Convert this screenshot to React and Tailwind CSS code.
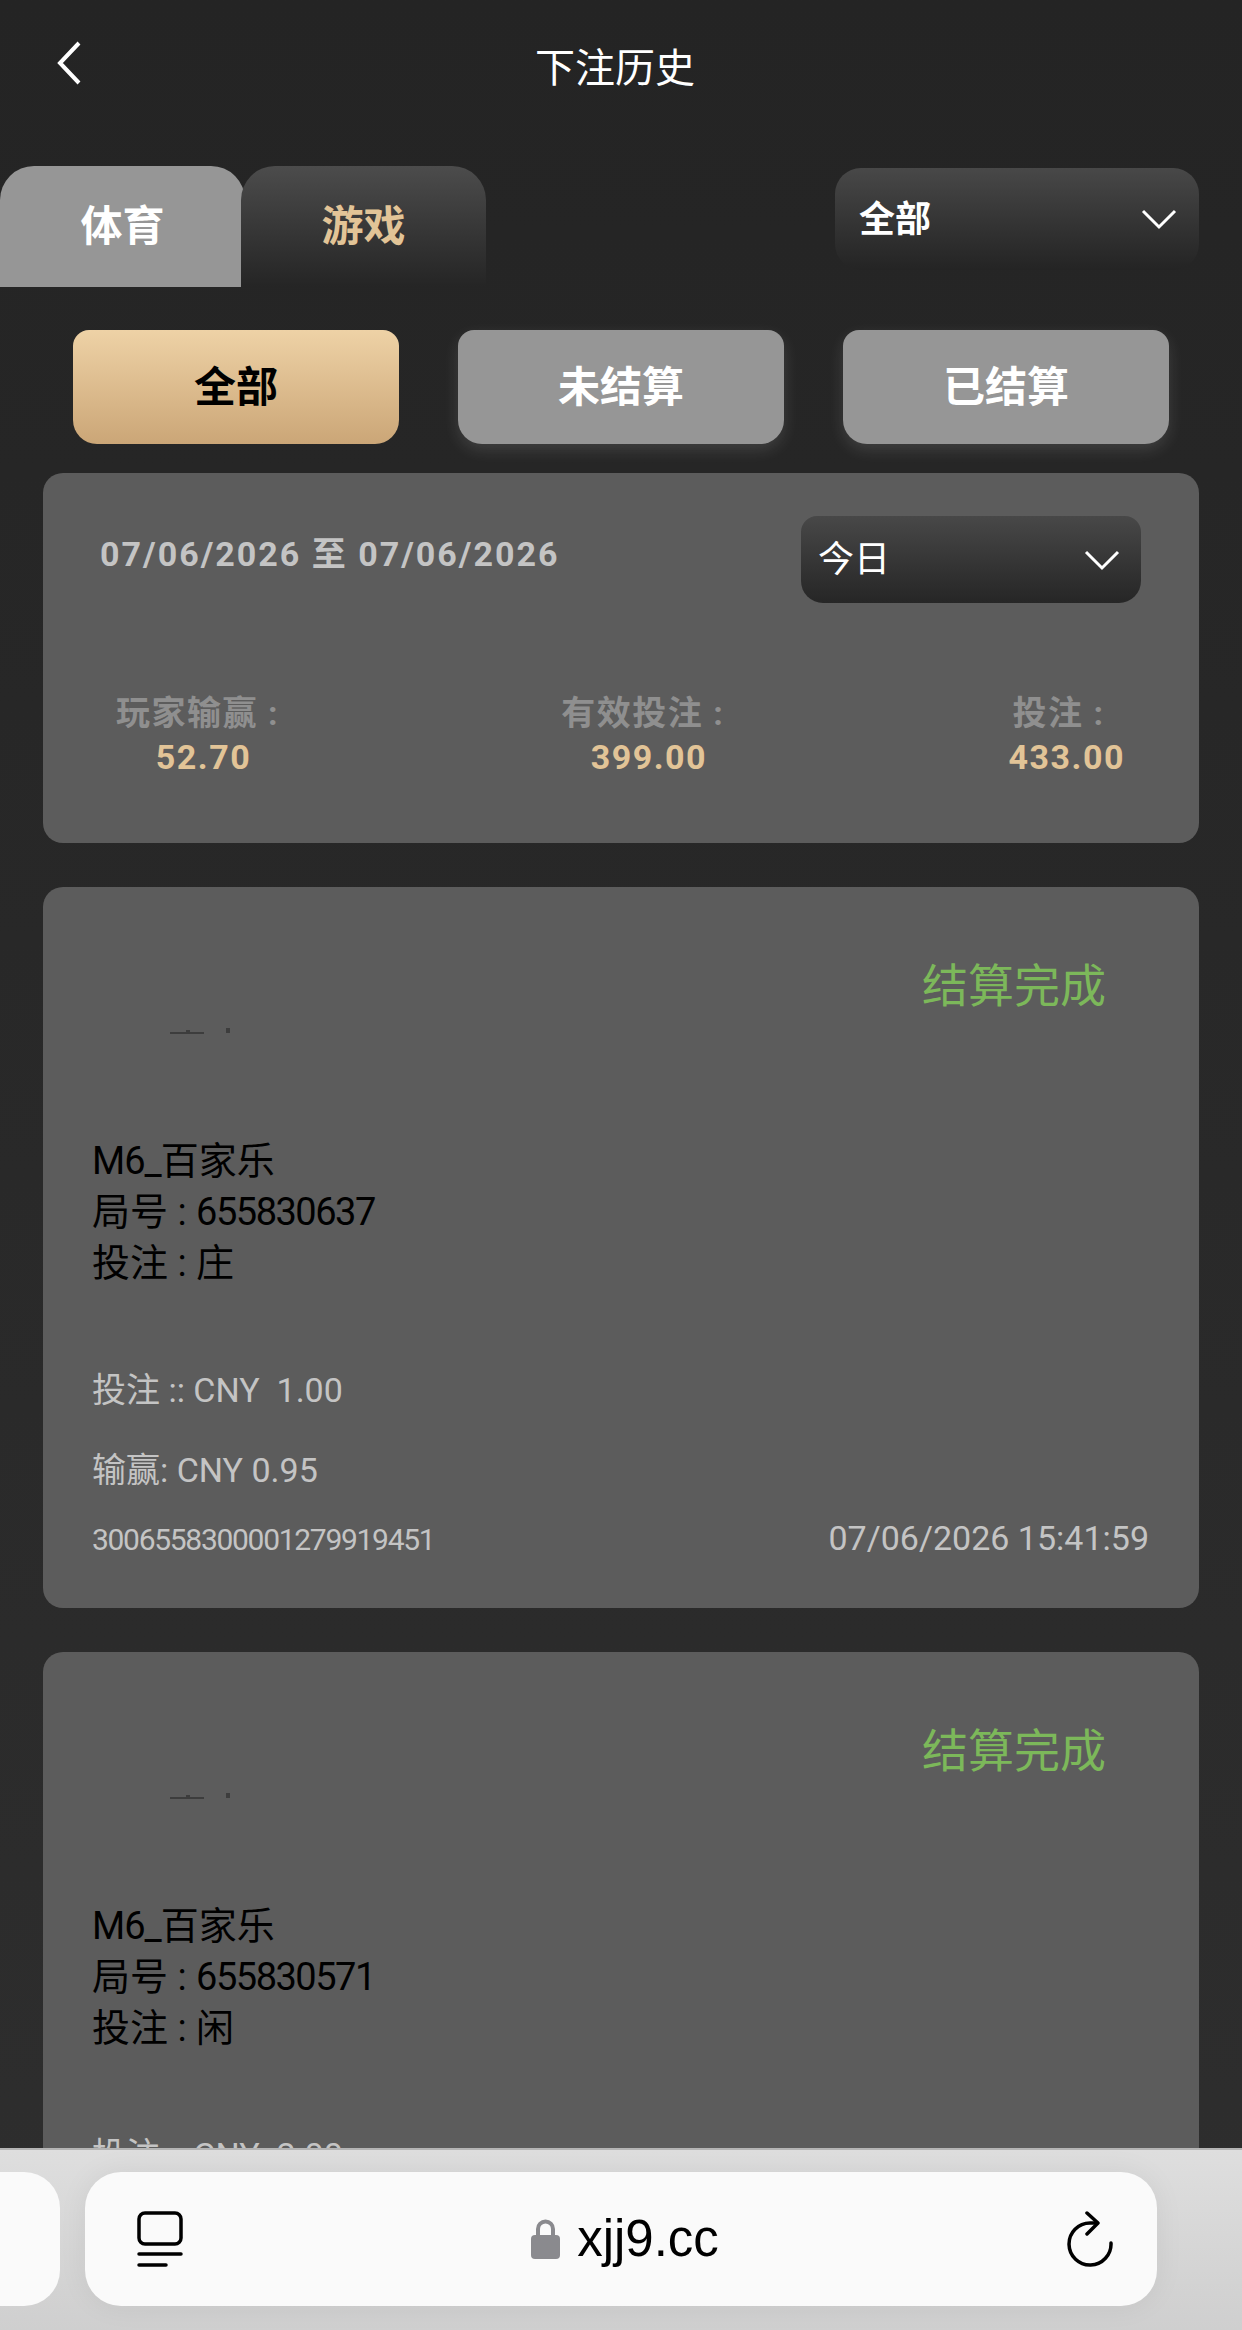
import React from 'react';

const font = { fontFamily: '"Roboto", "Noto Sans CJK SC", sans-serif' };

const Chevron = ({ className }) => (
  <svg className={className} viewBox="0 0 36 22" fill="none" stroke="#fff" strokeWidth="3">
    <path d="M2 3 L18 19 L34 3" />
  </svg>
);

const Stat = ({ label, value, className = '' }) => (
  <div className={`text-center ${className}`}>
    <div className="flex items-center text-[34px] font-bold leading-[44px] tracking-[1.5px] text-[#8f8f8f]">
      {label}
      <span className="ml-[10px] pr-[6px]">:</span>
    </div>
    <div className="pl-[6px] text-[34px] font-bold leading-[44px] tracking-[1.5px] text-[#e2c497]">{value}</div>
  </div>
);

const BetCard = ({ round, side, id, time, stake, win }) => (
  <div className="mx-[43px] mt-[44px] h-[721px] shrink-0 rounded-[20px] bg-[#5c5c5c] pl-[49px] pr-[50px]">
    <div className="pt-[67px] pr-[43px] text-right text-[46px] leading-[64px] text-[#7cb85a]">结算完成</div>
    {/* clipped line of the original page */}
    <div className="mt-[8px] flex h-[8px] items-end pl-[78px]">
      <div className="relative h-[2px] w-[34px] bg-[#3d3d3d]">
        <div className="absolute left-[16px] top-[-2px] h-[2px] w-[4px] bg-[#3d3d3d]"></div>
      </div>
      <div className="ml-[22px] mb-[1px] h-[5px] w-[4px] bg-[#3d3d3d]"></div>
    </div>
    <div className="mt-[102px] text-[38px] leading-[51px] text-black">
      <div><span className="tracking-[-1px]">M6_</span>百家乐</div>
      <div>局号 : <span className="tracking-[-1.5px]">{round}</span></div>
      <div>投注 : {side}</div>
    </div>
    <div className="mt-[76px] text-[34px] leading-[50px] text-[#c4c4c4]">投注 :: CNY&nbsp;&nbsp;{stake}</div>
    <div className="mt-[30px] text-[34px] leading-[50px] text-[#c4c4c4]">输赢: CNY {win}</div>
    <div className="mt-[25px] flex items-center justify-between text-[#c4c4c4]">
      <span className="text-[30px] leading-[40px] tracking-[-1.3px]">{id}</span>
      <span className="-mt-[4px] text-[34px] leading-[40px]">{time}</span>
    </div>
  </div>
);

const App = () => {
  return (
    <div style={font} className="relative flex h-[2330px] w-[1242px] flex-col overflow-hidden bg-gradient-to-b from-[#242424] to-[#2e2e2e]">
      {/* Header */}
      <div className="relative flex h-[166px] shrink-0 justify-center pt-[41px] pr-[12px]">
        <svg className="absolute left-[54px] top-[40px] h-[46px] w-[30px]" viewBox="0 0 30 46" fill="none" stroke="#fff" strokeWidth="4">
          <path d="M25 3 L6 23 L25 43" />
        </svg>
        <span className="text-[40px] leading-[56px] text-white">下注历史</span>
      </div>

      {/* Tabs + filter */}
      <div className="flex h-[121px] shrink-0 items-start justify-between pr-[43px]">
        <div className="flex">
          <div className="flex h-[121px] w-[245px] items-center justify-center rounded-t-[34px] bg-[#969696] text-[42px] font-bold text-white">体育</div>
          <div className="z-10 -ml-[4px] flex h-[121px] w-[245px] items-center justify-center rounded-t-[34px] bg-gradient-to-b from-[#4c4c4c] to-[#252525] text-[42px] font-bold text-[#e2c497]">游戏</div>
        </div>
        <div className="mt-[2px] flex h-[102px] w-[364px] items-center justify-between rounded-[26px] bg-gradient-to-b from-[#484848] to-[#242424] pl-[24px] pr-[22px]">
          <span className="mt-[1px] text-[36px] font-bold leading-[48px] text-white">全部</span>
          <Chevron className="h-[22px] w-[36px]" />
        </div>
      </div>

      {/* Status buttons */}
      <div className="mt-[43px] flex h-[114px] shrink-0 gap-[59px] pl-[73px]">
        <div className="flex w-[326px] items-center justify-center rounded-t-[16px] rounded-b-[24px] bg-gradient-to-b from-[#eed2a6] to-[#cba677] text-[42px] font-bold text-black">全部</div>
        <div className="flex w-[326px] items-center justify-center rounded-t-[16px] rounded-b-[24px] bg-[#969696] text-[42px] font-bold text-white shadow-[0_6px_16px_rgba(255,255,255,0.12)]">未结算</div>
        <div className="flex w-[326px] items-center justify-center rounded-t-[16px] rounded-b-[24px] bg-[#969696] text-[42px] font-bold text-white shadow-[0_6px_16px_rgba(255,255,255,0.12)]">已结算</div>
      </div>

      {/* Summary */}
      <div className="mx-[43px] mt-[29px] h-[370px] shrink-0 rounded-[20px] bg-[#5c5c5c]">
        <div className="flex items-start justify-between pl-[57px] pr-[58px] pt-[43px]">
          <span className="mt-[14px] text-[34px] font-bold leading-[48px] tracking-[2px] text-[#c4c4c4]">07/06/2026 至 07/06/2026</span>
          <div className="flex h-[87px] w-[340px] items-center justify-between rounded-t-[16px] rounded-b-[22px] bg-gradient-to-b from-[#484848] to-[#262626] pl-[17px] pr-[21px]">
            <span className="text-[36px] leading-[48px] text-white">今日</span>
            <Chevron className="h-[22px] w-[36px]" />
          </div>
        </div>
        <div className="mt-[88px] flex justify-between pl-[73px] pr-[74px]">
          <Stat label="玩家输赢" value="52.70" />
          <Stat label="有效投注" value="399.00" className="ml-[4px]" />
          <Stat label="投注" value="433.00" className="[&>div:first-child]:pl-[10px]" />
        </div>
      </div>

      <BetCard round="655830637" side="庄" stake="1.00" win="0.95" id="3006558300001279919451" time="07/06/2026 15:41:59" />
      <BetCard round="655830571" side="闲" stake="2.00" win="1.00" id="3006558300001279919440" time="07/06/2026 15:40:12" />

      {/* Browser bar, sits over the page */}
      <div className="absolute inset-x-0 bottom-0 flex h-[182px] items-start gap-[25px] border-t-2 border-[#b4b4b4] bg-gradient-to-b from-[#dedede] to-[#cfcfcf] pt-[22px]">
        <div className="h-[134px] w-[60px] shrink-0 rounded-r-[36px] bg-[#fafafa]"></div>
        <div className="flex h-[134px] w-[1072px] shrink-0 items-center justify-between rounded-[36px] bg-[#fafafa] pl-[52px] pr-[44px] shadow-[0_0_30px_rgba(0,0,0,0.06)]">
          <svg className="h-[56px] w-[46px]" viewBox="0 0 46 56" fill="none" stroke="#000" strokeWidth="3.5" strokeLinecap="round">
            <rect x="2" y="2" width="42" height="31" rx="6" />
            <path d="M2 43 H44" />
            <path d="M2 54 H29" />
          </svg>
          <div className="flex items-center gap-[17px]" >
            <svg className="h-[40px] w-[29px]" viewBox="0 0 29 40">
              <path d="M7 18 V10 a7.5 7.5 0 0 1 15 0 V18" fill="none" stroke="#8a8a8e" strokeWidth="4" />
              <rect x="0" y="16" width="29" height="24" rx="4" fill="#8a8a8e" />
            </svg>
            <span style={{ fontFamily: '"Liberation Sans", sans-serif' }} className="text-[51px] leading-[60px] text-black">xjj9.cc</span>
          </div>
          <svg className="h-[56px] w-[46px]" viewBox="0 0 46 56" fill="none" stroke="#000" strokeWidth="3.5" strokeLinecap="round" strokeLinejoin="round">
            <path d="M44 32 A21 21 0 1 1 23 12 H30" />
            <path d="M20 2 L31 12 L20 23" />
          </svg>
        </div>
      </div>
    </div>
  );
};

export default App;
